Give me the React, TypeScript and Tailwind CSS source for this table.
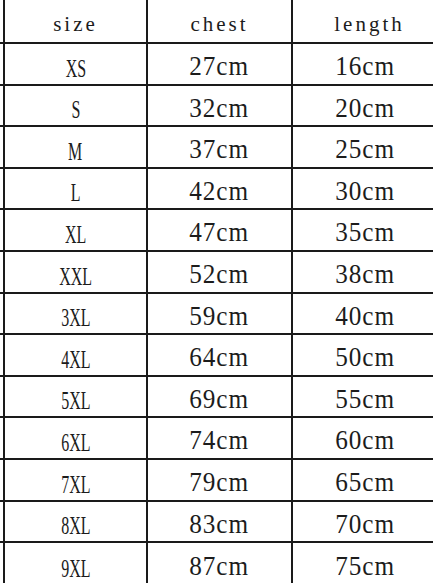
import React from "react";

const rows: { s: string; c: string; l: string; h: string }[] = [
  { s: "XS", c: "27cm", l: "16cm", h: "h-[42px]" },
  { s: "S", c: "32cm", l: "20cm", h: "h-[41px]" },
  { s: "M", c: "37cm", l: "25cm", h: "h-[42px]" },
  { s: "L", c: "42cm", l: "30cm", h: "h-[41px]" },
  { s: "XL", c: "47cm", l: "35cm", h: "h-[42px]" },
  { s: "XXL", c: "52cm", l: "38cm", h: "h-[42px]" },
  { s: "3XL", c: "59cm", l: "40cm", h: "h-[41px]" },
  { s: "4XL", c: "64cm", l: "50cm", h: "h-[42px]" },
  { s: "5XL", c: "69cm", l: "55cm", h: "h-[41px]" },
  { s: "6XL", c: "74cm", l: "60cm", h: "h-[42px]" },
  { s: "7XL", c: "79cm", l: "65cm", h: "h-[42px]" },
  { s: "8XL", c: "83cm", l: "70cm", h: "h-[41px]" },
  { s: "9XL", c: "87cm", l: "75cm", h: "h-[44px]" },
];

const serif = "font-['Liberation_Serif','Times_New_Roman',serif]";

export default function App() {
  return (
    <div className="w-[433px] h-[583px] overflow-hidden bg-white text-[#1c1c1c]">
      <div className="w-[460px]">
        <div className="flex h-[44px] border-b-2 border-[#1a1a1a] pl-[3px]">
          <div className="w-[143px] border-l-2 border-[#1a1a1a] flex items-center justify-center pt-[6px]">
            <span className={`${serif} text-[21px] leading-none tracking-[3px]`}>size</span>
          </div>
          <div className="w-[145px] border-l-2 border-[#1a1a1a] flex items-center justify-center pt-[6px]">
            <span className={`${serif} text-[21px] leading-none tracking-[3px]`}>chest</span>
          </div>
          <div className="w-[147px] border-l-2 border-[#1a1a1a] flex items-center justify-center pt-[6px] pl-[8px]">
            <span className={`${serif} text-[21px] leading-none tracking-[3px]`}>length</span>
          </div>
        </div>
        {rows.map((r) => (
          <div key={r.s} className={`flex ${r.h} border-b-2 border-[#1a1a1a] pl-[3px]`}>
            <div className="w-[143px] border-l-2 border-[#1a1a1a] flex items-center justify-center pt-[8px]">
              <span className={`${serif} inline-block text-[25px] leading-none scale-x-[0.64]`}>{r.s}</span>
            </div>
            <div className="w-[145px] border-l-2 border-[#1a1a1a] flex items-center justify-center pt-[4px]">
              <span className={`${serif} inline-block text-[28px] leading-none tracking-[1px] scale-x-[0.9]`}>{r.c}</span>
            </div>
            <div className="w-[147px] border-l-2 border-[#1a1a1a] flex items-center justify-center pt-[4px]">
              <span className={`${serif} inline-block text-[28px] leading-none tracking-[1px] scale-x-[0.9]`}>{r.l}</span>
            </div>
          </div>
        ))}
      </div>
    </div>
  );
}
